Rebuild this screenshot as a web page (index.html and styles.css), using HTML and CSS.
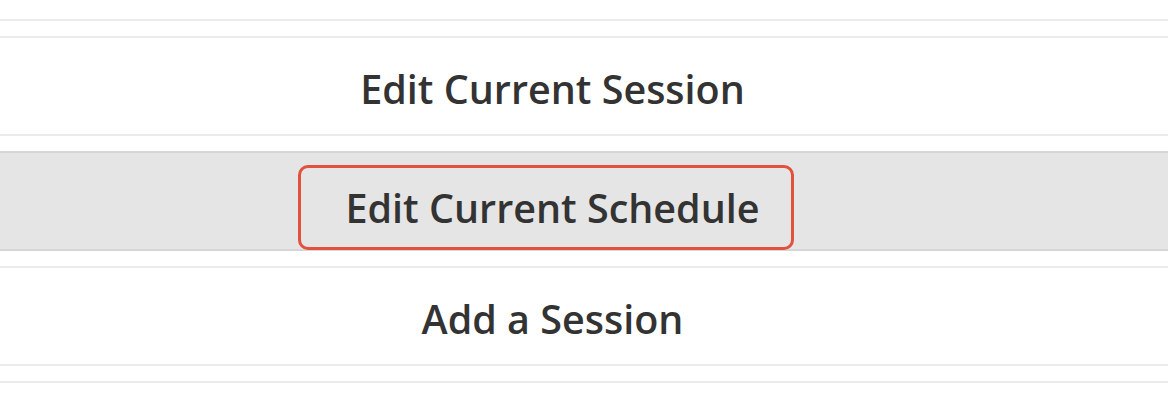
FILE: index.html
```html
<!DOCTYPE html>
<html lang="en">
<head>
<meta charset="utf-8">
<title>Menu</title>
<link rel="stylesheet" href="styles.css">
</head>
<body>
<ul class="menu">
  <li class="menu-item menu-item--cut"></li>
  <li class="menu-item"><span class="label">Edit Current Session</span></li>
  <li class="menu-item menu-item--active"><span class="label label--highlight">Edit Current Schedule</span></li>
  <li class="menu-item"><span class="label">Add a Session</span></li>
  <li class="menu-item menu-item--open"></li>
</ul>
</body>
</html>
```
FILE: styles.css
```css
html, body {
  margin: 0;
  padding: 0;
  background: #ffffff;
  overflow: hidden;
}
.menu {
  list-style: none;
  margin: 0;
  padding: 0;
  display: flex;
  flex-direction: column;
  gap: 15px;
  font-family: "Open Sans", "Liberation Sans", sans-serif;
  font-weight: 600;
  font-size: 39.5px;
  color: #333333;
}
.menu-item {
  box-sizing: border-box;
  height: 100px;
  border-top: 2px solid #ebebeb;
  border-bottom: 2px solid #ebebeb;
  display: flex;
  align-items: center;
  justify-content: center;
  padding-right: 63px;
  padding-top: 6px;
}
.menu-item--cut {
  height: 21px;
  border-top: none;
  padding: 0;
}
.menu-item--open {
  height: 33px;
  border-bottom: none;
}
.menu-item--active {
  background: #e5e5e5;
  border-top-color: #d6d6d6;
  border-bottom-color: #d6d6d6;
  padding-top: 2px;
}
.label {
  line-height: 52px;
}
.label--highlight {
  box-sizing: border-box;
  height: 85px;
  margin-top: 11px;
  margin-right: 13px;
  padding: 0 31px 0 44px;
  border: 3px solid #e2503e;
  border-radius: 10px;
  display: inline-flex;
  align-items: center;
}
```
